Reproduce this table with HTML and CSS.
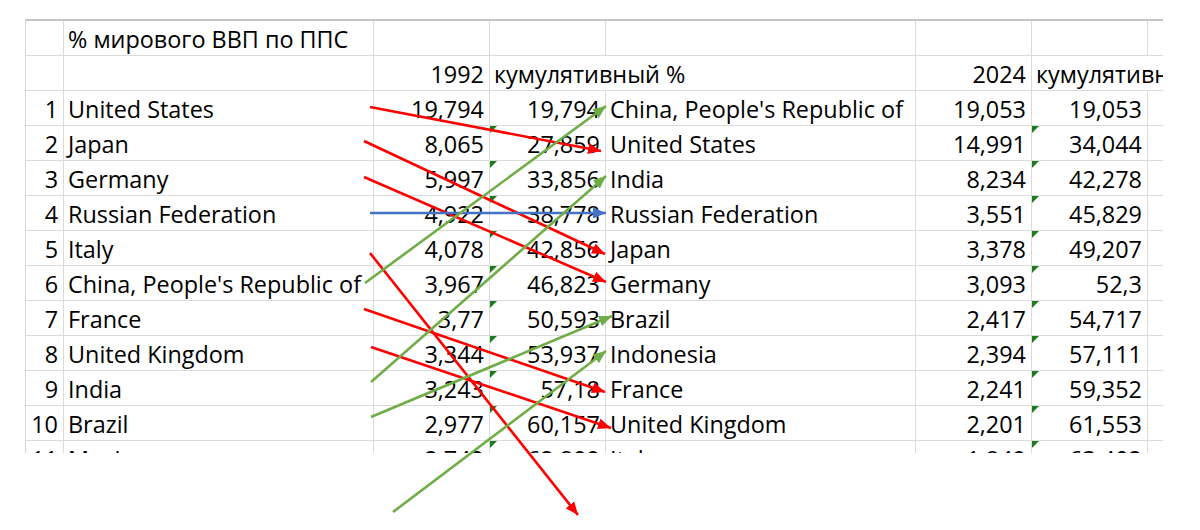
FILE: index.html
```html
<!DOCTYPE html>
<html lang="ru">
<head>
<meta charset="utf-8">
<title>% мирового ВВП по ППС</title>
<link rel="stylesheet" href="styles.css">
</head>
<body>
<div class="page">
  <div class="sheet">
    <div class="grid">
      <div class="c"></div><div class="c">% мирового ВВП по ППС</div><div class="c"></div><div class="c"></div><div class="c"></div><div class="c"></div><div class="c"></div><div class="c end"></div>
      <div class="c"></div><div class="c"></div><div class="c num">1992</div><div class="c spill">кумулятивный %</div><div class="c"></div><div class="c num">2024</div><div class="c spill">кумулятивный %</div><div class="c end"></div>

      <div class="c num">1</div><div class="c">United States</div><div class="c num">19,794</div><div class="c num">19,794</div><div class="c">China, People's Republic of</div><div class="c num">19,053</div><div class="c num">19,053</div><div class="c end"></div>
      <div class="c num">2</div><div class="c">Japan</div><div class="c num">8,065</div><div class="c num tri">27,859</div><div class="c">United States</div><div class="c num">14,991</div><div class="c num tri">34,044</div><div class="c end"></div>
      <div class="c num">3</div><div class="c">Germany</div><div class="c num">5,997</div><div class="c num tri">33,856</div><div class="c">India</div><div class="c num">8,234</div><div class="c num tri">42,278</div><div class="c end"></div>
      <div class="c num">4</div><div class="c">Russian Federation</div><div class="c num">4,922</div><div class="c num tri">38,778</div><div class="c">Russian Federation</div><div class="c num">3,551</div><div class="c num tri">45,829</div><div class="c end"></div>
      <div class="c num">5</div><div class="c">Italy</div><div class="c num">4,078</div><div class="c num tri">42,856</div><div class="c">Japan</div><div class="c num">3,378</div><div class="c num tri">49,207</div><div class="c end"></div>
      <div class="c num">6</div><div class="c">China, People's Republic of</div><div class="c num">3,967</div><div class="c num tri">46,823</div><div class="c">Germany</div><div class="c num">3,093</div><div class="c num tri">52,3</div><div class="c end"></div>
      <div class="c num">7</div><div class="c">France</div><div class="c num">3,77</div><div class="c num tri">50,593</div><div class="c">Brazil</div><div class="c num">2,417</div><div class="c num tri">54,717</div><div class="c end"></div>
      <div class="c num">8</div><div class="c">United Kingdom</div><div class="c num">3,344</div><div class="c num tri">53,937</div><div class="c">Indonesia</div><div class="c num">2,394</div><div class="c num tri">57,111</div><div class="c end"></div>
      <div class="c num">9</div><div class="c">India</div><div class="c num">3,243</div><div class="c num tri">57,18</div><div class="c">France</div><div class="c num">2,241</div><div class="c num tri">59,352</div><div class="c end"></div>
      <div class="c num">10</div><div class="c">Brazil</div><div class="c num">2,977</div><div class="c num tri">60,157</div><div class="c">United Kingdom</div><div class="c num">2,201</div><div class="c num tri">61,553</div><div class="c end"></div>
      <div class="c num">11</div><div class="c">Mexico</div><div class="c num">2,742</div><div class="c num tri">62,899</div><div class="c">Italy</div><div class="c num">1,849</div><div class="c num tri">63,402</div><div class="c end"></div>
    </div>
  </div>

  <svg class="arrows" width="1200" height="530" viewBox="0 0 1200 530" xmlns="http://www.w3.org/2000/svg">
    <defs>
      <marker id="hr" markerUnits="userSpaceOnUse" markerWidth="15" markerHeight="12" refX="13" refY="5.5" orient="auto">
        <path d="M0,0 L13,5.5 L0,11 Z" fill="#ff0000"/>
      </marker>
      <marker id="hg" markerUnits="userSpaceOnUse" markerWidth="15" markerHeight="12" refX="13" refY="5.5" orient="auto">
        <path d="M0,0 L13,5.5 L0,11 Z" fill="#70ad47"/>
      </marker>
      <marker id="hb" markerUnits="userSpaceOnUse" markerWidth="15" markerHeight="12" refX="13" refY="5.5" orient="auto">
        <path d="M0,0 L13,5.5 L0,11 Z" fill="#4472c4"/>
      </marker>
    </defs>
    <g class="red" marker-end="url(#hr)">
      <line x1="370" y1="107" x2="601" y2="151"/>
      <line x1="364" y1="141" x2="605" y2="254"/>
      <line x1="364" y1="177" x2="606" y2="282"/>
      <line x1="370" y1="253" x2="578" y2="515"/>
      <line x1="364" y1="309" x2="605" y2="392"/>
      <line x1="371" y1="347" x2="611" y2="428"/>
    </g>
    <g class="blue" marker-end="url(#hb)">
      <line x1="370" y1="213" x2="606" y2="213"/>
    </g>
    <g class="green" marker-end="url(#hg)">
      <line x1="365" y1="283" x2="606" y2="106"/>
      <line x1="371" y1="382" x2="606" y2="176"/>
      <line x1="371" y1="417" x2="612" y2="316"/>
      <line x1="393" y1="512" x2="606" y2="351"/>
    </g>
  </svg>
</div>
</body>
</html>
```

FILE: styles.css
```css
html, body {
  margin: 0;
  padding: 0;
  background: #ffffff;
}

.page {
  position: relative;
  width: 1200px;
  height: 530px;
  padding: 19px 0 0 25px;
  box-sizing: border-box;
  overflow: hidden;
  font-family: "Open Sans", "Noto Sans", "Liberation Sans", sans-serif;
  font-size: 23.4px;
  color: #000000;
}

.sheet {
  width: 1138px;
  height: 434px;
  box-sizing: border-box;
  border-top: 2px solid #c4c4c4;
  border-left: 1px solid #d6d6d6;
  overflow: hidden;
}

.grid {
  display: grid;
  grid-template-columns: 38px 310px 116px 116px 310px 116px 116px 1fr;
  grid-auto-rows: 35px;
}

.c {
  position: relative;
  box-sizing: border-box;
  border-right: 1px solid #dadada;
  border-bottom: 1px solid #dadada;
  padding: 0 4px;
  line-height: 36px;
  white-space: nowrap;
  overflow: hidden;
}

.c.end {
  border-right: none;
}

.num {
  text-align: right;
  padding-right: 5px;
}

.spill {
  overflow: visible;
  border-right-color: transparent;
  z-index: 1;
}

.tri::before {
  content: "";
  position: absolute;
  left: 0;
  top: 0;
  border-top: 7px solid #1d7a1d;
  border-right: 7px solid transparent;
}

.arrows {
  position: absolute;
  left: 0;
  top: 0;
  pointer-events: none;
}

.arrows line {
  stroke-width: 2.6;
  stroke-linecap: butt;
}

.red line { stroke: #ff0000; }
.green line { stroke: #70ad47; }
.blue line { stroke: #4472c4; }
```
